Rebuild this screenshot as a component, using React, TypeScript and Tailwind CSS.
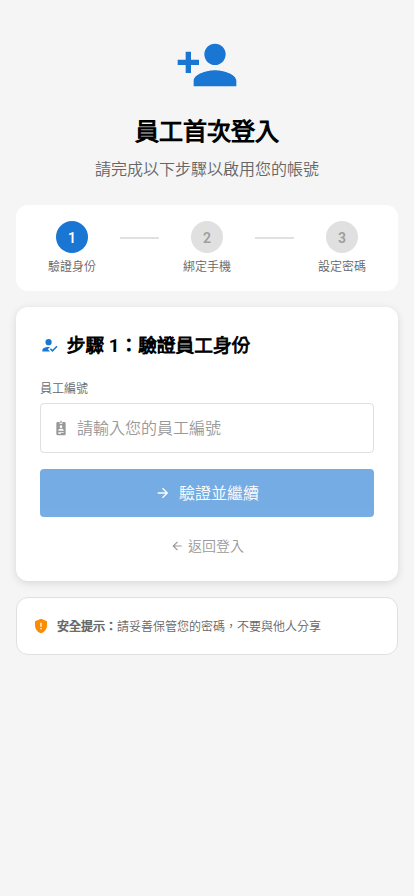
import { Fragment } from 'react';
import clsx from 'clsx';

const icons = {
  accountPlus:
    'M15,14C12.33,14 7,15.33 7,18V20H23V18C23,15.33 17.67,14 15,14M6,10V7H4V10H1V12H4V15H6V12H9V10M15,12A4,4 0 0,0 19,8A4,4 0 0,0 15,4A4,4 0 0,0 11,8A4,4 0 0,0 15,12Z',
  accountCheck:
    'M21.1,12.5L22.5,13.91L15.97,20.5L12.5,17L13.9,15.59L15.97,17.67L21.1,12.5M10,17L13,20H3V18C3,15.79 6.58,14 11,14L12.89,14.11L10,17M11,4A4,4 0 0,1 15,8A4,4 0 0,1 11,12A4,4 0 0,1 7,8A4,4 0 0,1 11,4Z',
  badge:
    'M17,3H14V6H10V3H7A2,2 0 0,0 5,5V21A2,2 0 0,0 7,23H17A2,2 0 0,0 19,21V5A2,2 0 0,0 17,3M12,8A2,2 0 0,1 14,10A2,2 0 0,1 12,12A2,2 0 0,1 10,10A2,2 0 0,1 12,8M16,16H8V15C8,13.67 10.67,13 12,13C13.33,13 16,13.67 16,15V16M13,5H11V1H13V5M16,19H8V18H16V19M12,21H8V20H12V21Z',
  arrowRight: 'M4,11V13H16L10.5,18.5L11.92,19.92L19.84,12L11.92,4.08L10.5,5.5L16,11H4Z',
  arrowLeft: 'M20,11V13H8L13.5,18.5L12.08,19.92L4.16,12L12.08,4.08L13.5,5.5L8,11H20Z',
  shieldAlert:
    'M12,1L3,5V11C3,16.55 6.84,21.74 12,23C17.16,21.74 21,16.55 21,11V5L12,1M11,7H13V13H11V7M11,15H13V17H11V15Z',
};

const steps = [
  { label: '驗證身份', active: true },
  { label: '綁定手機', active: false },
  { label: '設定密碼', active: false },
];

function Icon({ name, className }: { name: keyof typeof icons; className?: string }) {
  return (
    <svg viewBox="0 0 24 24" fill="currentColor" className={clsx('shrink-0', className)} aria-hidden>
      <path d={icons[name]} />
    </svg>
  );
}

function Stepper() {
  return (
    <div className="flex items-start rounded-xl bg-white p-4">
      {steps.map((step, i) => (
        <Fragment key={step.label}>
          {i > 0 && <div className="mx-2 mt-4 h-0.5 flex-1 bg-[#e0e0e0]" />}
          <div className="flex w-20 flex-col items-center">
            <div
              className={clsx(
                'flex size-8 items-center justify-center rounded-full pt-0.5 text-sm leading-none font-semibold',
                step.active ? 'bg-[#1976d2] text-white' : 'bg-[#e0e0e0] text-[#9e9e9e]',
              )}
            >
              {i + 1}
            </div>
            <span className="mt-1.5 text-xs leading-4 text-[#666]">{step.label}</span>
          </div>
        </Fragment>
      ))}
    </div>
  );
}

export default function App() {
  return (
    <main
      lang="zh-TW"
      className="flex min-h-screen flex-col gap-4 bg-[#f5f5f5] px-4 pt-[33px] font-[Roboto,'Noto_Sans_CJK_TC',sans-serif] font-[350] text-black"
    >
      <header className="mb-[7px] flex flex-col items-center">
        <Icon name="accountPlus" className="size-16 text-[#1976d2]" />
        <h1 className="mt-4 text-2xl leading-[38px] font-[350] [-webkit-text-stroke:1.2px]">員工首次登入</h1>
        <p className="mt-[7px] text-base leading-6 text-[#666]">請完成以下步驟以啟用您的帳號</p>
      </header>

      <Stepper />

      <section className="rounded-xl bg-white p-6 shadow-[0_2px_8px_rgba(0,0,0,0.12)]">
        <h3 className="flex h-7 items-center gap-2 text-[18.72px] font-[350]">
          <Icon name="accountCheck" className="size-[18.72px] text-[#1976d2]" />
          <span className="pt-0.5 leading-7 [-webkit-text-stroke:0.95px]">
            步驟 <b className="font-bold [-webkit-text-stroke:0px]">1</b>：驗證員工身份
          </span>
        </h3>

        <label className="mt-[22px] block text-xs leading-4 text-[#666]" htmlFor="employee-id">
          員工編號
        </label>
        <div className="mt-1.5 flex h-[50px] items-center gap-2 rounded border border-[#e0e0e0] px-3">
          <Icon name="badge" className="size-4 text-[#999]" />
          <input
            id="employee-id"
            className="min-w-0 flex-1 pt-0.5 text-base outline-none placeholder:text-[#999]"
            placeholder="請輸入您的員工編號"
          />
        </div>

        <button className="mt-4 flex h-12 w-full items-center justify-center gap-2 rounded bg-[#1976d2] text-base text-white opacity-60">
          <Icon name="arrowRight" className="size-4" />
          <span className="pt-0.5">驗證並繼續</span>
        </button>
        <button className="mt-4 flex h-6 w-full items-center justify-center gap-1 text-sm text-[#999]">
          <Icon name="arrowLeft" className="mt-px size-3.5" />
          <span className="pt-0.5">返回登入</span>
        </button>
      </section>

      <aside className="flex h-[58px] items-center gap-2 rounded-xl border border-[#e0e0e0] bg-white px-4 text-xs text-[#666]">
        <Icon name="shieldAlert" className="size-4 text-[#fb8c00]" />
        <p className="pt-0.5">
          <strong className="font-[350] [-webkit-text-stroke:0.65px]">安全提示：</strong>請妥善保管您的密碼，不要與他人分享
        </p>
      </aside>
    </main>
  );
}
